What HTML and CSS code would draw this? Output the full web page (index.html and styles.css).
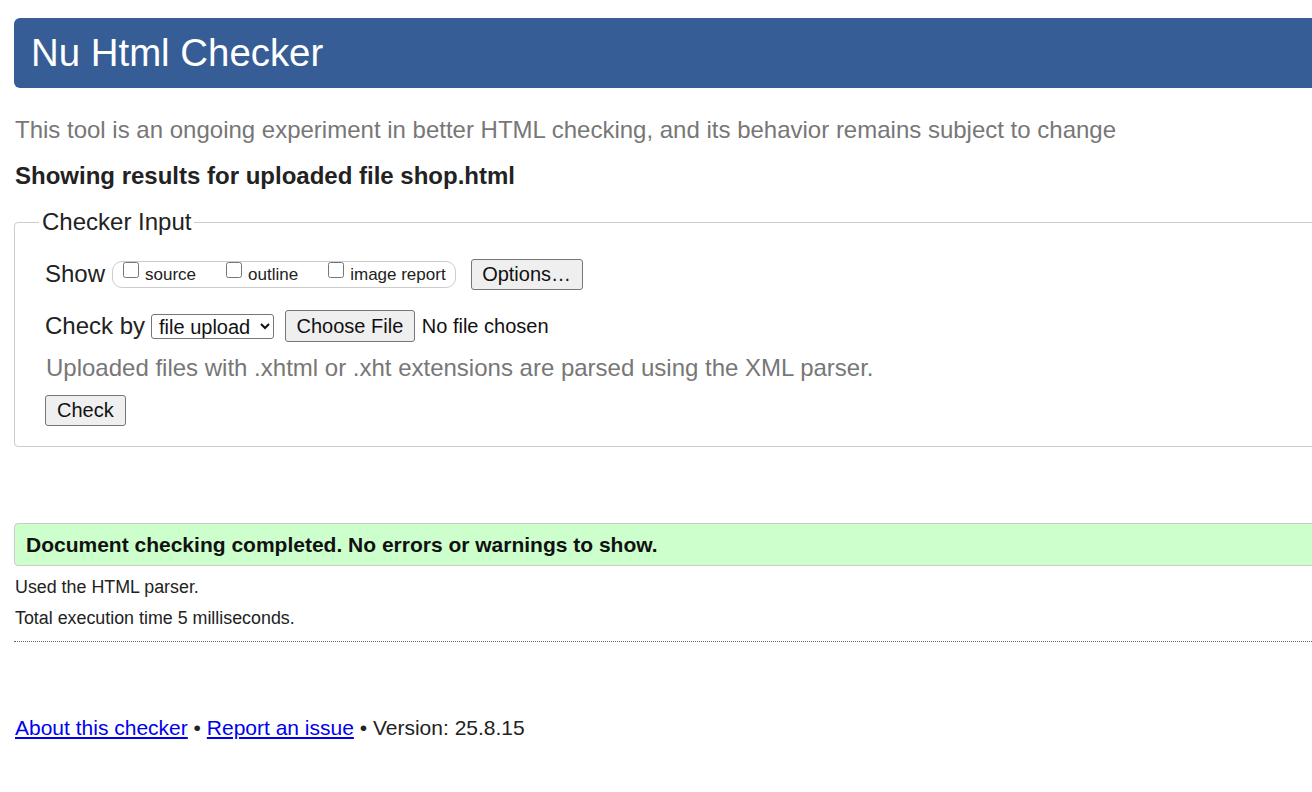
FILE: index.html
```html
<!DOCTYPE html>
<html lang="en">
<head>
<meta charset="utf-8">
<title>Nu Html Checker</title>
<link rel="stylesheet" href="styles.css">
</head>
<body>
<div class="page">
  <h1 class="banner">Nu Html Checker</h1>
  <p class="intro">This tool is an ongoing experiment in better HTML checking, and its behavior remains subject to change</p>
  <p class="results-for">Showing results for uploaded file shop.html</p>
  <form class="checker">
    <fieldset class="input-box">
      <legend class="input-legend">Checker Input</legend>
      <div class="row">
        <span class="row-label">Show</span>
        <span class="show-group">
          <label class="opt"><input type="checkbox" class="cb">source</label>
          <label class="opt"><input type="checkbox" class="cb">outline</label>
          <label class="opt"><input type="checkbox" class="cb">image report</label>
        </span>
        <button type="button" class="btn btn-options">Options…</button>
      </div>
      <div class="row row-by">
        <span class="row-label">Check by</span>
        <select class="by-select"><option>file upload</option></select>
        <input type="file" class="file-input">
      </div>
      <p class="hint">Uploaded files with .xhtml or .xht extensions are parsed using the XML parser.</p>
      <div class="submit-row"><button type="button" class="btn btn-check">Check</button></div>
    </fieldset>
  </form>
  <div class="success">Document checking completed. No errors or warnings to show.</div>
  <p class="meta">Used the HTML parser.</p>
  <p class="meta">Total execution time 5 milliseconds.</p>
  <hr class="sep">
  <p class="footer"><a href="#" class="flink">About this checker</a> • <a href="#" class="flink">Report an issue</a> • Version: 25.8.15</p>
</div>
</body>
</html>
```
FILE: styles.css
```css
html {
  overflow: hidden;
}
body {
  margin: 0;
  font-family: "Liberation Sans", Arial, sans-serif;
  color: #222;
  background: #fff;
}
.page {
  width: 1420px;
  padding: 18px 0 0 14px;
}
.banner {
  margin: 0;
  height: 70px;
  line-height: 70px;
  background: #365d95;
  color: #fff;
  font-size: 38.4px;
  font-weight: normal;
  padding-left: 17px;
  border-radius: 6px;
}
.intro {
  margin: 28px 0 0;
  padding-left: 1px;
  font-size: 24px;
  line-height: 28px;
  color: #777;
}
.results-for {
  margin: 18px 0 0;
  padding-left: 1px;
  font-size: 24px;
  line-height: 28px;
  font-weight: bold;
}
.checker {
  margin: 0;
}
.input-box {
  margin: 18px 0 0;
  border: 1px solid #ccc;
  border-radius: 4px;
  padding: 22px 0 20px 30px;
  min-width: 0;
}
.input-legend {
  font-size: 24px;
  line-height: 28px;
  padding: 0 3px;
  margin-left: -6px;
}
.row {
  display: flex;
  align-items: center;
  height: 32px;
}
.row-by {
  margin-top: 20px;
}
.row-label {
  font-size: 24px;
  line-height: 28px;
}
.show-group {
  display: flex;
  align-items: center;
  height: 25px;
  margin-left: 7px;
  padding: 0 9px 0 10px;
  border: 1px solid #ccc;
  border-radius: 10px;
}
.opt {
  display: flex;
  align-items: center;
  height: 25px;
  font-size: 17px;
  line-height: 25px;
}
.opt + .opt {
  margin-left: 30px;
}
.cb {
  width: 16px;
  height: 16px;
  margin: 0 6px 8px 0;
}
.btn {
  font-family: inherit;
  font-size: 20px;
  color: #111;
  background: #efefef;
  border: 1px solid #767676;
  border-radius: 3px;
  height: 31px;
  padding: 0 12px;
}
.btn-options {
  margin-left: 15px;
  padding: 0 10.5px;
}
.by-select {
  margin-left: 6px;
  width: 123px;
  height: 25px;
  font-family: inherit;
  font-size: 20px;
  color: #111;
  padding: 0 0 0 3px;
  border: 1px solid #767676;
  border-radius: 3px;
  background: #fff;
}
.file-input {
  margin-left: 11px;
  font-family: inherit;
  font-size: 20px;
  color: #111;
}
.file-input::file-selector-button {
  font-family: inherit;
  font-size: 20px;
  color: #111;
  height: 32px;
  padding: 0 10.5px;
  margin-right: 7px;
  background: #efefef;
  border: 1px solid #767676;
  border-radius: 3px;
}
.hint {
  margin: 12px 0 0;
  padding-left: 1px;
  font-size: 24px;
  line-height: 28px;
  color: #777;
}
.submit-row {
  margin-top: 13px;
}
.btn-check {
  padding: 0 11px;
}
.success {
  margin-top: 76px;
  height: 41px;
  line-height: 41px;
  border: 1px solid #ccc;
  border-radius: 4px;
  background: #ccffcc;
  font-size: 21px;
  font-weight: bold;
  color: #111;
  padding-left: 11px;
}
.meta {
  margin: 11px 0 0;
  padding-left: 1px;
  font-size: 17.85px;
  line-height: 20px;
}
.sep {
  margin: 13px 0 0;
  height: 0;
  border: 0;
  border-top: 1px dotted #666;
}
.footer {
  margin: 74px 0 0;
  padding-left: 1px;
  font-size: 21px;
  line-height: 24px;
}
.flink {
  color: #0000ee;
  text-decoration: underline;
}
```
